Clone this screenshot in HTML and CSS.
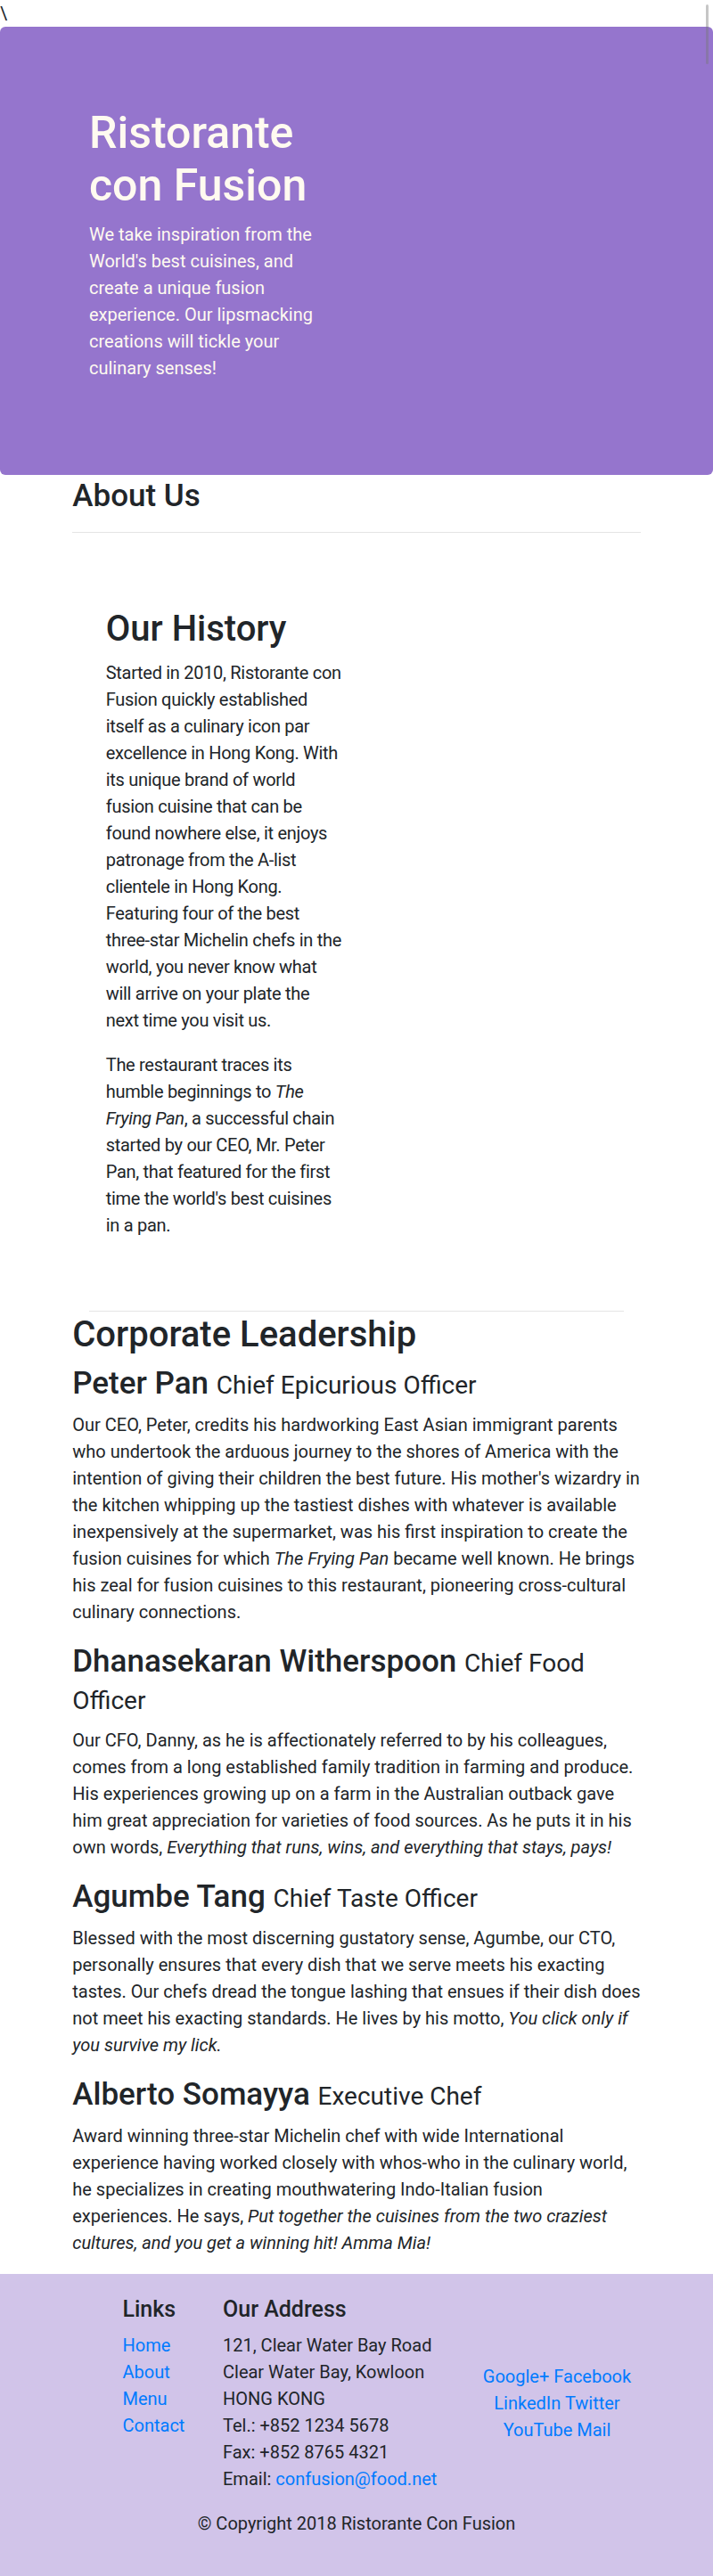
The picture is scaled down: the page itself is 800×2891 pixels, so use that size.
FILE: index.html
```html
<!DOCTYPE html>
<html lang="en">
<head>
<meta charset="utf-8">
<title>Ristorante con Fusion - About Us</title>
<link rel="stylesheet" href="styles.css">
</head>
<body>
<div class="stray">\</div>
<div class="scroll-thumb"></div>

<header class="jumbotron">
  <div class="container">
    <div class="row-header">
      <div class="hero-col">
        <h1>Ristorante con Fusion</h1>
        <p>We take inspiration from the World's best cuisines, and create a unique fusion experience. Our lipsmacking creations will tickle your culinary senses!</p>
      </div>
    </div>
  </div>
</header>

<main class="container">
  <h3 class="page-title">About Us</h3>
  <hr class="rule">

  <section class="history">
    <div class="history-col">
      <h2>Our History</h2>
      <p>Started in 2010, Ristorante con Fusion quickly established itself as a culinary icon par excellence in Hong Kong. With its unique brand of world fusion cuisine that can be found nowhere else, it enjoys patronage from the A-list clientele in Hong Kong. Featuring four of the best three-star Michelin chefs in the world, you never know what will arrive on your plate the next time you visit us.</p>
      <p>The restaurant traces its humble beginnings to <em>The Frying Pan</em>, a successful chain started by our CEO, Mr. Peter Pan, that featured for the first time the world's best cuisines in a pan.</p>
    </div>
  </section>

  <section class="leadership">
    <h2>Corporate Leadership</h2>
    <h3 class="person">Peter Pan <small>Chief Epicurious Officer</small></h3>
    <p>Our CEO, Peter, credits his hardworking East Asian immigrant parents who undertook the arduous journey to the shores of America with the intention of giving their children the best future. His mother's wizardry in the kitchen whipping up the tastiest dishes with whatever is available inexpensively at the supermarket, was his first inspiration to create the fusion cuisines for which <em>The Frying Pan</em> became well known. He brings his zeal for fusion cuisines to this restaurant, pioneering cross-cultural culinary connections.</p>
    <h3 class="person">Dhanasekaran Witherspoon <small>Chief Food Officer</small></h3>
    <p>Our CFO, Danny, as he is affectionately referred to by his colleagues, comes from a long established family tradition in farming and produce. His experiences growing up on a farm in the Australian outback gave him great appreciation for varieties of food sources. As he puts it in his own words, <em>Everything that runs, wins, and everything that stays, pays!</em></p>
    <h3 class="person">Agumbe Tang <small>Chief Taste Officer</small></h3>
    <p>Blessed with the most discerning gustatory sense, Agumbe, our CTO, personally ensures that every dish that we serve meets his exacting tastes. Our chefs dread the tongue lashing that ensues if their dish does not meet his exacting standards. He lives by his motto, <em>You click only if you survive my lick.</em></p>
    <h3 class="person">Alberto Somayya <small>Executive Chef</small></h3>
    <p>Award winning three-star Michelin chef with wide International experience having worked closely with whos-who in the culinary world, he specializes in creating mouthwatering Indo-Italian fusion experiences. He says, <em>Put together the cuisines from the two craziest cultures, and you get a winning hit! Amma Mia!</em></p>
  </section>
</main>

<footer class="footer">
  <div class="container">
    <div class="footer-row">
      <div class="col-links">
        <h5>Links</h5>
        <ul class="plain-list">
          <li><a href="#">Home</a></li>
          <li><a href="#">About</a></li>
          <li><a href="#">Menu</a></li>
          <li><a href="#">Contact</a></li>
        </ul>
      </div>
      <div class="col-address">
        <h5>Our Address</h5>
        <address>
          121, Clear Water Bay Road<br>
          Clear Water Bay, Kowloon<br>
          HONG KONG<br>
          Tel.: +852 1234 5678<br>
          Fax: +852 8765 4321<br>
          Email: <a href="#">confusion@food.net</a>
        </address>
      </div>
      <div class="col-social">
        <div class="social">
          <a href="#">Google+</a> <a href="#">Facebook</a> <a href="#">LinkedIn</a> <a href="#">Twitter</a> <a href="#">YouTube</a> <a href="#">Mail</a>
        </div>
      </div>
    </div>
    <div class="copy-row">
      <p>© Copyright 2018 Ristorante Con Fusion</p>
    </div>
  </div>
</footer>
</body>
</html>
```
FILE: styles.css
```css
* { box-sizing: border-box; }

html, body { margin: 0; padding: 0; }

body {
  font-family: Roboto, "Liberation Sans", Arial, sans-serif;
  font-size: 20px;
  line-height: 1.5;
  color: #212529;
  background: #fff;
}

.stray {
  height: 30px;
  line-height: 30px;
}

.scroll-thumb {
  position: absolute;
  top: 5px;
  right: 5px;
  width: 3px;
  height: 67px;
  background: rgba(120, 120, 120, 0.42);
  border-radius: 2px;
  z-index: 5;
}

h1, h2, h3, h5 {
  margin: 0 0 10px;
  font-weight: 500;
  line-height: 1.2;
}

h1 { font-size: 50px; }
h2 { font-size: 40px; }
h3 { font-size: 35px; }
h5 { font-size: 25px; }

p { margin: 0 0 20px; }

a { color: #007bff; text-decoration: none; }

.container {
  width: 675px;
  margin: 0 auto;
  padding: 0 18.75px;
}

/* Jumbotron */
.jumbotron {
  background: #9575cd;
  color: #fffaf0;
  border-radius: 6px;
  padding: 90px 37.5px 85px;
  margin: 0;
}

.jumbotron .container {
  width: 675px;
}

.row-header {
  display: flex;
}

.hero-col {
  width: 318.75px;
  padding: 0 18.75px;
}

.hero-col h1 {
  font-size: 50px;
  line-height: 59px;
}

/* About */
.page-title {
  margin: 0;
  padding-top: 3px;
  line-height: 42px;
}

.rule {
  border: 0;
  border-top: 1px solid rgba(0, 0, 0, 0.1);
  margin: 19px 0 20px;
  height: 0;
}

.history {
  margin: 0 18.75px;
  padding: 64px 0 61px;
  border-bottom: 1px solid rgba(0, 0, 0, 0.1);
  display: flex;
}

.history-col {
  width: 306px;
  padding: 0 18.75px;
}

.history-col p {
  letter-spacing: -0.3px;
}

.leadership {
  padding-top: 2px;
}

.leadership h2 {
  margin-bottom: 10px;
}

.person small {
  font-size: 80%;
  font-weight: 400;
}

/* Footer */
.footer {
  background: #d1c4e9;
  padding: 25px 0;
}

.footer-row {
  display: flex;
  margin: 0 -18.75px;
}

.col-links {
  margin-left: 56.25px;
  width: 112.5px;
  padding: 0 18.75px;
}

.col-address {
  width: 281.25px;
  padding: 0 18.75px;
}

.col-social {
  width: 225px;
  padding: 0 18.75px;
  align-self: center;
}

.social {
  text-align: center;
}

.plain-list {
  list-style: none;
  margin: 0 0 20px;
  padding: 0;
}

address {
  font-style: normal;
  margin: 0 0 20px;
}

.copy-row {
  display: flex;
  justify-content: center;
}
```
